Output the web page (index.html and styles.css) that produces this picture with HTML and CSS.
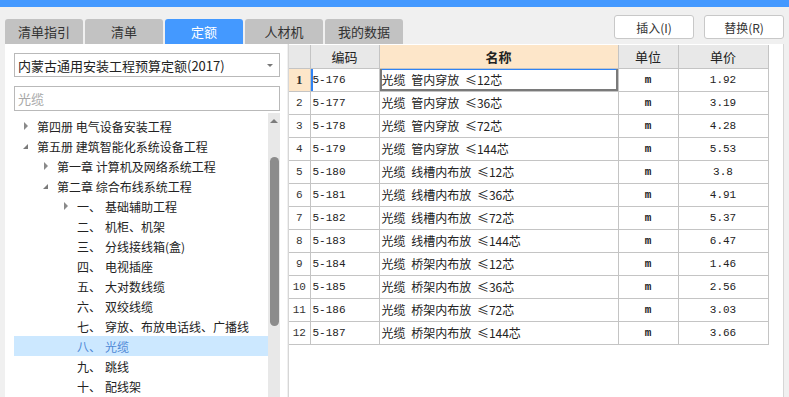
FILE: index.html
```html
<!DOCTYPE html>
<html lang="zh-CN">
<head>
  <meta charset="UTF-8" />
  <meta name="viewport" content="width=device-width, initial-scale=1.0" />
  <title>定额</title>
  <link rel="stylesheet" href="styles.css">
</head>
<body>
  <div class="topbar"></div>

  <div class="toolbar">
    <div class="tabs">
      <div class="tab">清单指引</div>
      <div class="tab">清单</div>
      <div class="tab active">定额</div>
      <div class="tab">人材机</div>
      <div class="tab">我的数据</div>
    </div>
    <div class="actions">
      <button class="btn">插入(I)</button>
      <button class="btn">替换(R)</button>
    </div>
  </div>

  <div class="main">
    <div class="left-panel">
      <div class="select">
        <span>内蒙古通用安装工程预算定额(2017)</span>
        <span class="caret"></span>
      </div>
      <div class="search">
        <input type="text" placeholder="光缆" />
      </div>

      <div class="tree-wrap">
        <ul class="tree">
          <li class="lv0"><span class="arrow closed"></span>第四册 电气设备安装工程</li>
          <li class="lv0"><span class="arrow open"></span>第五册 建筑智能化系统设备工程</li>
          <li class="lv1"><span class="arrow closed"></span>第一章 计算机及网络系统工程</li>
          <li class="lv1"><span class="arrow open"></span>第二章 综合布线系统工程</li>
          <li class="lv2"><span class="arrow closed"></span><span class="num">一、</span>基础辅助工程</li>
          <li class="lv2"><span class="arrow"></span><span class="num">二、</span>机柜、机架</li>
          <li class="lv2"><span class="arrow"></span><span class="num">三、</span>分线接线箱(盒)</li>
          <li class="lv2"><span class="arrow"></span><span class="num">四、</span>电视插座</li>
          <li class="lv2"><span class="arrow"></span><span class="num">五、</span>大对数线缆</li>
          <li class="lv2"><span class="arrow"></span><span class="num">六、</span>双绞线缆</li>
          <li class="lv2"><span class="arrow"></span><span class="num">七、</span>穿放、布放电话线、广播线</li>
          <li class="lv2 selected"><span class="arrow"></span><span class="num">八、</span>光缆</li>
          <li class="lv2"><span class="arrow"></span><span class="num">九、</span>跳线</li>
          <li class="lv2"><span class="arrow"></span><span class="num">十、</span>配线架</li>
        </ul>
        <div class="scrollbar">
          <span class="up"></span>
          <span class="thumb"></span>
        </div>
      </div>
    </div>

    <div class="right-panel">
      <table class="grid">
        <thead>
          <tr>
            <th class="c-no"></th>
            <th class="c-code">编码</th>
            <th class="c-name current">名称</th>
            <th class="c-unit">单位</th>
            <th class="c-price">单价</th>
          </tr>
        </thead>
        <tbody>
          <tr class="active">
            <td class="c-no">1</td><td class="c-code">5-176</td><td class="c-name">光缆 管内穿放 ≤12芯</td><td class="c-unit">m</td><td class="c-price">1.92</td>
          </tr>
          <tr>
            <td class="c-no">2</td><td class="c-code">5-177</td><td class="c-name">光缆 管内穿放 ≤36芯</td><td class="c-unit">m</td><td class="c-price">3.19</td>
          </tr>
          <tr>
            <td class="c-no">3</td><td class="c-code">5-178</td><td class="c-name">光缆 管内穿放 ≤72芯</td><td class="c-unit">m</td><td class="c-price">4.28</td>
          </tr>
          <tr>
            <td class="c-no">4</td><td class="c-code">5-179</td><td class="c-name">光缆 管内穿放 ≤144芯</td><td class="c-unit">m</td><td class="c-price">5.53</td>
          </tr>
          <tr>
            <td class="c-no">5</td><td class="c-code">5-180</td><td class="c-name">光缆 线槽内布放 ≤12芯</td><td class="c-unit">m</td><td class="c-price">3.8</td>
          </tr>
          <tr>
            <td class="c-no">6</td><td class="c-code">5-181</td><td class="c-name">光缆 线槽内布放 ≤36芯</td><td class="c-unit">m</td><td class="c-price">4.91</td>
          </tr>
          <tr>
            <td class="c-no">7</td><td class="c-code">5-182</td><td class="c-name">光缆 线槽内布放 ≤72芯</td><td class="c-unit">m</td><td class="c-price">5.37</td>
          </tr>
          <tr>
            <td class="c-no">8</td><td class="c-code">5-183</td><td class="c-name">光缆 线槽内布放 ≤144芯</td><td class="c-unit">m</td><td class="c-price">6.47</td>
          </tr>
          <tr>
            <td class="c-no">9</td><td class="c-code">5-184</td><td class="c-name">光缆 桥架内布放 ≤12芯</td><td class="c-unit">m</td><td class="c-price">1.46</td>
          </tr>
          <tr>
            <td class="c-no">10</td><td class="c-code">5-185</td><td class="c-name">光缆 桥架内布放 ≤36芯</td><td class="c-unit">m</td><td class="c-price">2.56</td>
          </tr>
          <tr>
            <td class="c-no">11</td><td class="c-code">5-186</td><td class="c-name">光缆 桥架内布放 ≤72芯</td><td class="c-unit">m</td><td class="c-price">3.03</td>
          </tr>
          <tr>
            <td class="c-no">12</td><td class="c-code">5-187</td><td class="c-name">光缆 桥架内布放 ≤144芯</td><td class="c-unit">m</td><td class="c-price">3.66</td>
          </tr>
        </tbody>
      </table>
    </div>
  </div>
</body>
</html>
```

FILE: styles.css
```css
:root {
  --blue: #4499ff;
  --bg: #f0f0f0;
  --line: #c4c4c4;
  --head: #e8e8e8;
  --peach: #fde6c9;
  --text: #222222;
}

* {
  box-sizing: border-box;
}

body {
  margin: 0;
  height: 397px;
  overflow: hidden;
  background: var(--bg);
  color: var(--text);
  font-family: "Noto Sans CJK SC", "Noto Sans", sans-serif;
  font-size: 12px;
}

.topbar {
  height: 7px;
  background: var(--blue);
}

/* toolbar: tabs + buttons */
.toolbar {
  height: 37px;
  display: flex;
  justify-content: space-between;
  padding: 0 5px;
}

.tabs {
  display: flex;
  gap: 2px;
  align-self: flex-end;
}

.tab {
  width: 78px;
  height: 25px;
  background: #c2c2c2;
  border-radius: 3px 3px 0 0;
  display: flex;
  align-items: center;
  justify-content: center;
  font-size: 13px;
  color: #333;
}

.tab.active {
  background: var(--blue);
  color: #fff;
}

.actions {
  display: flex;
  gap: 10px;
  margin-top: 8px;
  align-self: flex-start;
}

.btn {
  width: 80px;
  height: 24px;
  background: #fff;
  border: 1px solid #c8c8c8;
  border-radius: 3px;
  font-family: inherit;
  font-size: 12px;
  color: #333;
  padding: 0;
}

/* main area */
.main {
  display: flex;
  height: 353px;
  padding: 0 5px;
  gap: 1px;
}

.left-panel {
  width: 282px;
  background: #fff;
  padding: 9px 7px 0 9px;
  display: flex;
  flex-direction: column;
}

.select {
  height: 24px;
  border: 1px solid #b9b9b9;
  display: flex;
  align-items: center;
  justify-content: space-between;
  padding: 0 6px 0 3px;
  font-size: 13px;
}

.caret {
  width: 0;
  height: 0;
  border-left: 3px solid transparent;
  border-right: 3px solid transparent;
  border-top: 3px solid #777;
}

.search {
  margin-top: 9px;
}

.search input {
  width: 100%;
  height: 25px;
  border: 1px solid #b9b9b9;
  padding: 0 3px;
  font-family: inherit;
  font-size: 13px;
  outline: none;
}

.search input::placeholder {
  color: #a8a8a8;
}

.tree-wrap {
  flex: 1;
  display: flex;
  margin-top: 2px;
  overflow: hidden;
}

.tree {
  flex: 1;
  list-style: none;
  margin: 0;
  padding: 3px 0 0;
}

.tree li {
  height: 20px;
  display: flex;
  align-items: center;
  white-space: nowrap;
  font-size: 12px;
  color: #222;
}

.tree .lv0 { padding-left: 5px; }
.tree .lv1 { padding-left: 25px; }
.tree .lv2 { padding-left: 45px; }

.tree li.selected {
  background: #cce8ff;
  color: #4f88d6;
}

.arrow {
  width: 12px;
  height: 20px;
  margin-right: 6px;
  position: relative;
}

.arrow.closed::before {
  content: "";
  position: absolute;
  left: 5px;
  top: 6px;
  border-top: 4px solid transparent;
  border-bottom: 4px solid transparent;
  border-left: 4px solid #8a8a8a;
}

.arrow.open::before {
  content: "";
  position: absolute;
  left: 4px;
  top: 8px;
  border-left: 5px solid transparent;
  border-bottom: 5px solid #7a7a7a;
}

.num {
  width: 28px;
}

.scrollbar {
  width: 12px;
  background: #e8e8e8;
  display: flex;
  flex-direction: column;
  align-items: center;
}

.scrollbar .up {
  margin-top: 6px;
  width: 0;
  height: 0;
  border-left: 4px solid transparent;
  border-right: 4px solid transparent;
  border-bottom: 4px solid #7c7c7c;
}

.scrollbar .thumb {
  margin-top: 34px;
  width: 9px;
  height: 169px;
  background: #8c8c8c;
  border-radius: 5px;
}

/* right grid */
.right-panel {
  width: 496px;
  background: #fff;
  border-right: 1px solid #d6d6d6;
  border-left: 1px solid #d6d6d6;
}

.grid {
  border-collapse: collapse;
  table-layout: fixed;
  width: 479px;
  margin-top: 1px;
}

.grid th,
.grid td {
  border: 1px solid var(--line);
  height: 23px;
  padding: 0 2px;
  overflow: hidden;
  white-space: nowrap;
}

.grid th {
  background: var(--head);
  font-weight: normal;
  font-size: 13px;
  text-align: center;
}

.grid th.current {
  background: var(--peach);
  font-weight: bold;
}

.grid tr > :first-child { border-left: none; }
.grid thead th { border-top: none; }

.c-no { width: 21px; }
.c-code { width: 69px; }
.c-name { width: 239px; }
.c-unit { width: 60px; }
.c-price { width: 90px; }

.grid td.c-no {
  font-family: "Liberation Mono", monospace;
  font-size: 11px;
  text-align: center;
  padding: 0;
  color: #333;
}

.grid td.c-code {
  font-family: "Liberation Mono", monospace;
  font-size: 11px;
}

.grid td.c-name {
  font-size: 12px;
  word-spacing: 3px;
}

.grid td.c-unit {
  font-family: "Liberation Mono", monospace;
  font-size: 11px;
  font-weight: bold;
  text-align: center;
}

.grid td.c-price {
  font-family: "Liberation Mono", monospace;
  font-size: 11px;
  text-align: center;
}

.grid tr.active td.c-no {
  background: var(--peach);
  font-family: "Liberation Serif", serif;
  font-size: 13px;
  font-weight: bold;
}

.grid tr.active td.c-code {
  box-shadow: inset 2px 0 #2f83f5;
}

.grid tr.active td.c-name {
  box-shadow: inset 2px 0 #7a7a7a, inset -2px 0 #7a7a7a, inset 0 -2px #7a7a7a, inset 0 1px #2f83f5;
}
```
